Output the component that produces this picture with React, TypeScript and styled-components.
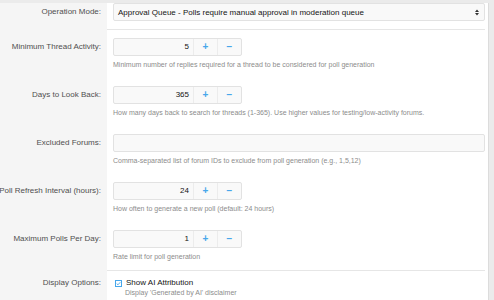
import styled, { createGlobalStyle } from "styled-components";

const GlobalStyle = createGlobalStyle`
  html, body {
    margin: 0;
    padding: 0;
    background: #ebebeb;
    font-family: "Liberation Sans", Arial, sans-serif;
  }
`;

const Page = styled.div`
  width: 494px;
  height: 300px;
  overflow: hidden;
  padding-top: 3px;
  box-sizing: border-box;
`;

const Block = styled.div`
  width: 489px;
  background: #fff;
  border-right: 1px solid #dcdcdc;
  border-bottom: 1px solid #dcdcdc;
  box-sizing: border-box;
`;

const Row = styled.dl`
  display: grid;
  grid-template-columns: 107px 1fr;
  margin: 0;
`;

const Label = styled.dt`
  background: #f5f5f5;
  display: flex;
  justify-content: flex-end;
  align-items: flex-start;
  font-size: 8px;
  color: #4f4f4f;
  padding: ${(p) => (p.$top ?? 8) + 4}px 6px 0 0;
  line-height: 10px;
  white-space: nowrap;
  min-width: 0;
`;

const Body = styled.dd`
  margin: 0;
  padding: ${(p) => p.$top ?? 8}px 0 ${(p) => p.$bottom ?? 8}px 6px;
  margin-right: 3px;
  border-bottom: ${(p) => (p.$separated ? "1px solid #e6e6e6" : "none")};
`;

const Select = styled.div`
  height: 18px;
  box-sizing: border-box;
  border: 1px solid #e2e2e2;
  border-radius: 2px;
  background: #f9f9f9;
  display: flex;
  align-items: center;
  justify-content: space-between;
  padding: 0 5px 0 4px;
  font-size: 8px;
  color: #141414;
`;

const Arrows = styled.span`
  display: flex;
  align-items: center;
`;

const NumberBox = styled.div`
  display: flex;
  width: 129px;
  height: 18px;
  box-sizing: border-box;
  border: 1px solid #e2e2e2;
  border-radius: 2px;
  background: #f9f9f9;
`;

const NumberValue = styled.div`
  flex: 1;
  text-align: right;
  padding-right: 4px;
  font-size: 8px;
  line-height: 16px;
  color: #141414;
`;

const StepButton = styled.div`
  width: 23px;
  border-left: 1px solid #ececec;
  color: #47a7eb;
  font-size: 10px;
  font-weight: bold;
  line-height: 15px;
  text-align: center;
`;

const TextBox = styled.div`
  height: 18px;
  box-sizing: border-box;
  border: 1px solid #e2e2e2;
  border-radius: 2px;
  background: #f9f9f9;
`;

const Hint = styled.div`
  margin-top: 3px;
  font-size: 7px;
  line-height: 11px;
  color: #8c8c8c;
  white-space: nowrap;
`;

const CheckRow = styled.label`
  display: flex;
  align-items: center;
  gap: 4px;
  padding-left: 2px;
  font-size: 8px;
  line-height: 10px;
  color: #141414;
`;

const CheckHint = styled(Hint)`
  margin-top: 0;
  padding-left: 12px;
  line-height: 10px;
`;

const CheckBox = () => (
  <svg width="7" height="7" viewBox="0 0 7 7">
    <rect x="0.5" y="0.5" width="6" height="6" fill="#fff" stroke="#47a7eb" />
    <path d="M1.7 3.6 L3 4.8 L5.3 2.2" fill="none" stroke="#47a7eb" strokeWidth="0.9" />
  </svg>
);

const NumberField = ({ value }: { value: string }) => (
  <NumberBox>
    <NumberValue>{value}</NumberValue>
    <StepButton>+</StepButton>
    <StepButton>−</StepButton>
  </NumberBox>
);

const numberRows = [
  {
    label: "Minimum Thread Activity:",
    value: "5",
    hint: "Minimum number of replies required for a thread to be considered for poll generation",
  },
  {
    label: "Days to Look Back:",
    value: "365",
    hint: "How many days back to search for threads (1-365). Use higher values for testing/low-activity forums.",
  },
];

const laterRows = [
  {
    label: "Poll Refresh Interval (hours):",
    value: "24",
    hint: "How often to generate a new poll (default: 24 hours)",
  },
  {
    label: "Maximum Polls Per Day:",
    value: "1",
    hint: "Rate limit for poll generation",
  },
];

export default function App() {
  return (
    <Page>
      <GlobalStyle />
      <Block>
        <Row>
          <Label $top={0}>Operation Mode:</Label>
          <Body $top={0} $separated>
            <Select>
              <span>Approval Queue - Polls require manual approval in moderation queue</span>
              <Arrows>
                <svg width="4" height="7" viewBox="0 0 4 7">
                  <path d="M0 3 L2 0.5 L4 3 Z M0 4 L2 6.5 L4 4 Z" fill="#333" />
                </svg>
              </Arrows>
            </Select>
          </Body>
        </Row>
        {numberRows.map((r) => (
          <Row key={r.label}>
            <Label>{r.label}</Label>
            <Body>
              <NumberField value={r.value} />
              <Hint>{r.hint}</Hint>
            </Body>
          </Row>
        ))}
        <Row>
          <Label>Excluded Forums:</Label>
          <Body>
            <TextBox />
            <Hint>Comma-separated list of forum IDs to exclude from poll generation (e.g., 1,5,12)</Hint>
          </Body>
        </Row>
        {laterRows.map((r, i) => (
          <Row key={r.label}>
            <Label>{r.label}</Label>
            <Body $separated={i === laterRows.length - 1}>
              <NumberField value={r.value} />
              <Hint>{r.hint}</Hint>
            </Body>
          </Row>
        ))}
        <Row>
          <Label $top={3}>Display Options:</Label>
          <Body $top={7} $bottom={4}>
            <CheckRow>
              <CheckBox />
              Show AI Attribution
            </CheckRow>
            <CheckHint>Display 'Generated by AI' disclaimer</CheckHint>
          </Body>
        </Row>
      </Block>
    </Page>
  );
}
